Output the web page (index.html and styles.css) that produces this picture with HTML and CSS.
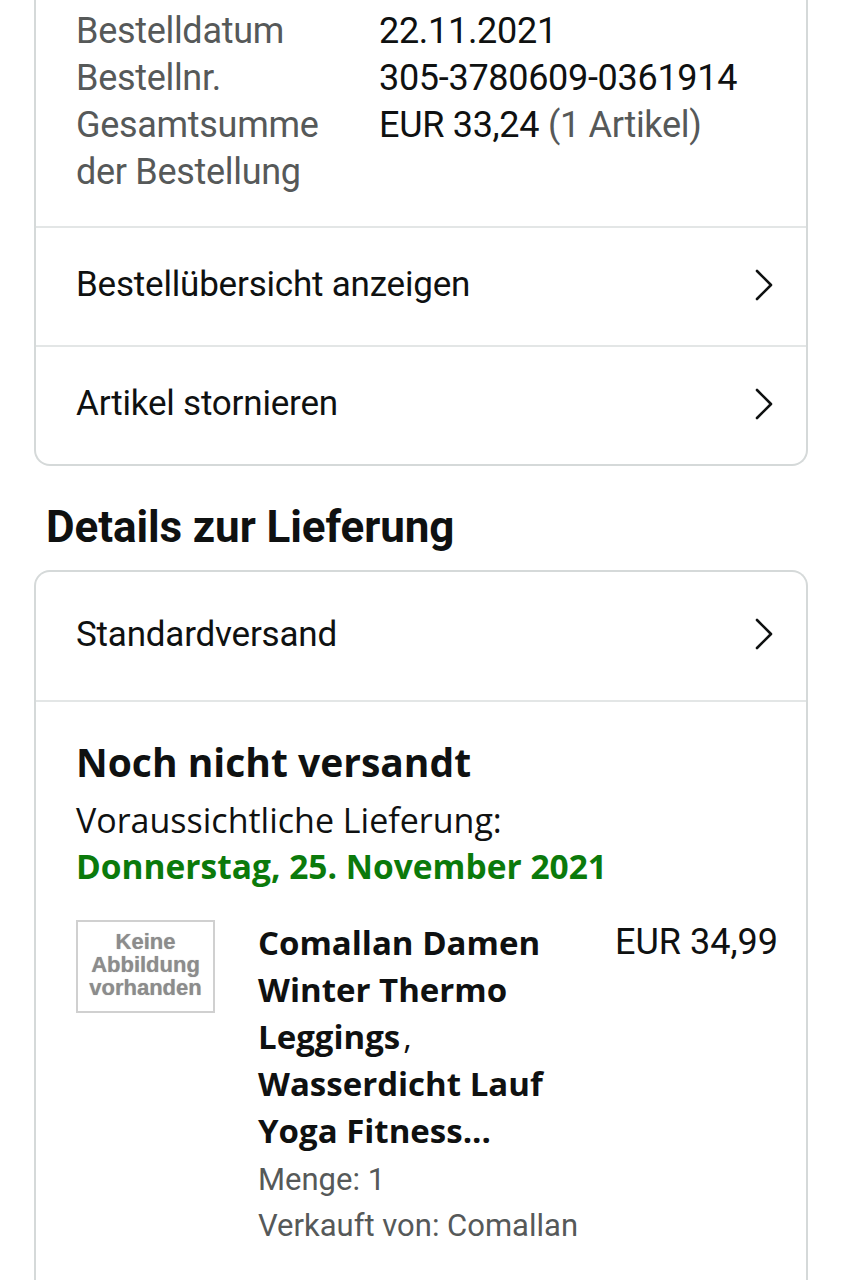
FILE: index.html
```html
<!DOCTYPE html>
<html lang="de">
<head>
<meta charset="utf-8">
<title>Bestelldetails</title>
<link rel="stylesheet" href="styles.css">
</head>
<body>
<main class="page">
  <section class="card card-top">
    <div class="info">
      <div class="label">Bestelldatum</div><div class="value">22.11.2021</div>
      <div class="label">Bestellnr.</div><div class="value">305-3780609-0361914</div>
      <div class="label">Gesamtsumme der Bestellung</div><div class="value">EUR 33,24 <span class="muted">(1 Artikel)</span></div>
    </div>
    <a class="row" href="#"><span>Bestellübersicht anzeigen</span><svg class="chev" viewBox="0 0 20 32" width="20" height="32"><path d="M3 2 L17 16 L3 30" fill="none" stroke="#0f1111" stroke-width="2.6" stroke-linecap="round" stroke-linejoin="round"/></svg></a>
    <a class="row" href="#"><span>Artikel stornieren</span><svg class="chev" viewBox="0 0 20 32" width="20" height="32"><path d="M3 2 L17 16 L3 30" fill="none" stroke="#0f1111" stroke-width="2.6" stroke-linecap="round" stroke-linejoin="round"/></svg></a>
  </section>

  <h2 class="heading">Details zur Lieferung</h2>

  <section class="card card-bottom">
    <a class="row row-tall" href="#"><span>Standardversand</span><svg class="chev" viewBox="0 0 20 32" width="20" height="32"><path d="M3 2 L17 16 L3 30" fill="none" stroke="#0f1111" stroke-width="2.6" stroke-linecap="round" stroke-linejoin="round"/></svg></a>
    <div class="shipment">
      <h3 class="status">Noch nicht versandt</h3>
      <div class="eta">Voraussichtliche Lieferung:</div>
      <div class="eta-date">Donnerstag, 25. November 2021</div>
      <div class="item">
        <div class="thumb"><span>Keine<br>Abbildung<br>vorhanden</span></div>
        <div class="item-body">
          <div class="item-title">Comallan Damen Winter Thermo Leggings<span class="comma">,</span> Wasserdicht Lauf Yoga Fitness...</div>
          <div class="item-meta meta-first">Menge: 1</div>
          <div class="item-meta">Verkauft von: Comallan</div>
        </div>
        <div class="price">EUR 34,99</div>
      </div>
    </div>
  </section>
</main>
</body>
</html>
```

FILE: styles.css
```css
* { box-sizing: border-box; }
html, body { margin: 0; padding: 0; background: #ffffff; }
body {
  font-family: Roboto, "Liberation Sans", sans-serif;
  color: #0f1111;
  width: 842px;
  height: 1280px;
  overflow: hidden;
}
.page { padding: 0 34px; }

.card {
  border: 2px solid #d5d9d9;
  background: #fff;
}
.card-top {
  border-top: none;
  border-radius: 0 0 16px 16px;
}
.card-bottom {
  border-bottom: none;
  border-radius: 16px 16px 0 0;
  min-height: 720px;
}

.info {
  display: grid;
  grid-template-columns: 303px 1fr;
  padding: 8px 40px 30px;
  font-size: 36px;
  line-height: 47px;
  letter-spacing: -0.3px;
}
.label { color: #565959; width: 250px; }
.value { color: #0f1111; }
.muted { color: #565959; }

.row {
  display: flex;
  align-items: center;
  justify-content: space-between;
  height: 119px;
  padding: 0 32px 4px 40px;
  border-top: 2px solid #e3e6e6;
  color: #0f1111;
  text-decoration: none;
  font-size: 35px;
  letter-spacing: -0.2px;
}
.card-bottom .row { border-top: none; border-bottom: 2px solid #e3e6e6; height: 130px; }
.chev { display: block; }

.heading {
  margin: 36px 0 18px 12px;
  font-size: 44px;
  line-height: 50px;
  font-weight: 700;
  letter-spacing: -0.1px;
}

.shipment { padding: 34px 28px 0 40px; }
.status {
  margin: 0;
  font-family: "Open Sans", sans-serif;
  font-weight: 700;
  font-size: 39px;
  line-height: 52px;
}
.eta {
  margin-top: 9px;
  font-family: "Open Sans", sans-serif;
  font-size: 34px;
  line-height: 46px;
}
.eta-date {
  font-family: "Open Sans", sans-serif;
  font-weight: 700;
  font-size: 33.5px;
  line-height: 46px;
  color: #0b7a0b;
}

.item {
  display: flex;
  align-items: flex-start;
  margin-top: 31px;
}
.thumb {
  flex: 0 0 139px;
  height: 93px;
  border: 2px solid #d0d0d0;
  display: flex;
  align-items: center;
  justify-content: center;
  text-align: center;
  font-family: "Liberation Sans", Arial, sans-serif;
  font-weight: 700;
  font-size: 22px;
  line-height: 23px;
  color: #8c8c8c;
  text-shadow: 0 0 1px #b0b0b0;
  padding-bottom: 4px;
}
.item-body {
  flex: 1 1 auto;
  margin-left: 43px;
  max-width: 300px;
}
.item-title {
  font-family: "Open Sans", sans-serif;
  font-weight: 700;
  font-size: 33px;
  line-height: 47px;
  margin-top: -1px;
}
.comma { font-weight: 400; margin-left: 3px; }
.item-meta {
  color: #565959;
  font-size: 31px;
  line-height: 46px;
  white-space: nowrap;
}
.meta-first { margin-top: 3px; }
.price {
  margin-left: auto;
  font-size: 36px;
  line-height: 47px;
  margin-top: -1px;
  white-space: nowrap;
}
```
